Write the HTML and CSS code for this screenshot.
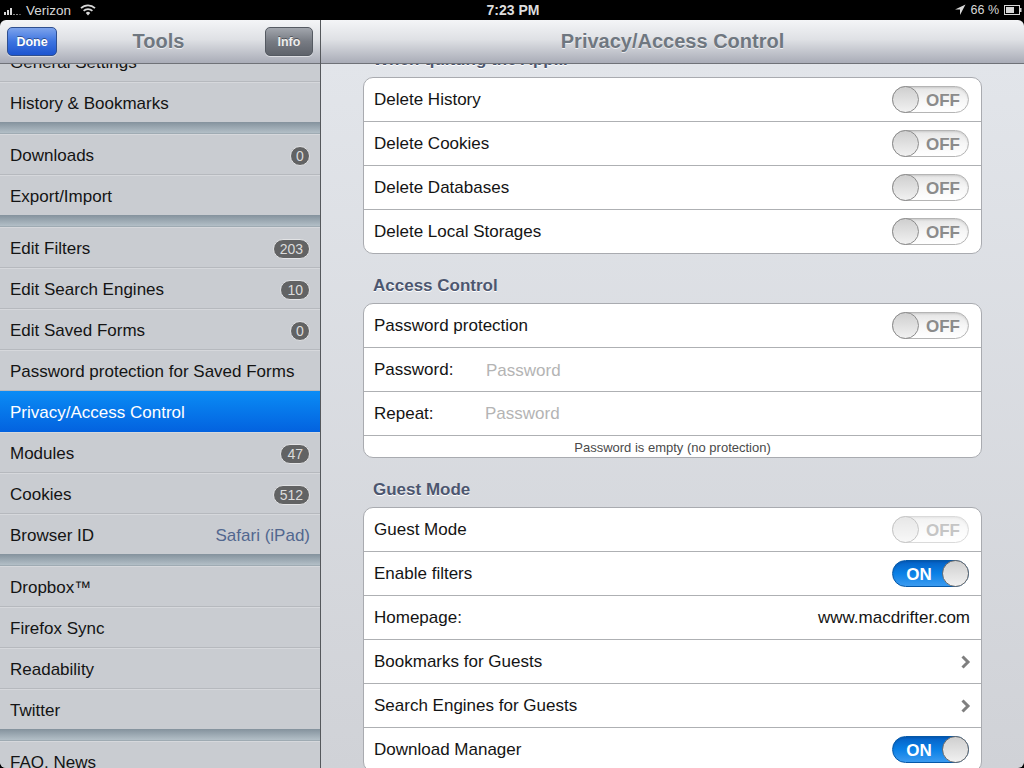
FILE: index.html
```html
<!DOCTYPE html>
<html lang="en">
<head>
<meta charset="utf-8">
<title>Privacy/Access Control</title>
<link rel="stylesheet" href="styles.css">
</head>
<body>
<div class="app">
  <header class="status">
    <div class="status-left">
      <svg class="signal" width="20" height="8" viewBox="0 0 20 8"><g fill="#d8d8d8"><rect x="0" y="5" width="2" height="3"/><rect x="3" y="3" width="2" height="5"/><rect x="6" y="1" width="2" height="7"/></g><g fill="#888"><rect x="9" y="7" width="2" height="1"/><rect x="12" y="7" width="2" height="1"/></g><rect x="15" y="7" width="2" height="1" fill="#555"/></svg>
      <span>Verizon</span>
      <svg class="wifi" width="16" height="12" viewBox="0 0 16 12"><g fill="none" stroke="#d8d8d8" stroke-width="1.7"><path d="M1 4.200a10 10 0 0 1 14 0"/><path d="M3.600 6.800a6.400 6.400 0 0 1 8.800 0"/></g><path d="M5.800 9a3 3 0 0 1 4.400 0L8 11.500z" fill="#d8d8d8"/></svg>
    </div>
    <div class="status-time">7:23 PM</div>
    <div class="status-right">
      <svg width="12" height="12" viewBox="0 0 12 12"><path d="M11.500.5 1 5.500h5V11z" fill="#d8d8d8"/></svg>
      <span class="pct">66 %</span>
      <svg width="18" height="10" viewBox="0 0 18 10"><rect x=".5" y=".5" width="15" height="9" fill="none" stroke="#d8d8d8"/><rect x="2" y="2" width="8" height="6" fill="#d8d8d8"/><rect x="16" y="3" width="1.500" height="4" fill="#d8d8d8"/></svg>
    </div>
  </header>

  <div class="screen">
    <aside class="side">
      <div class="nav">
        <button class="btn btn-done">Done</button>
        <h1 class="nav-title nav-title-side">Tools</h1>
        <button class="btn btn-info">Info</button>
      </div>
      <div class="side-scroll">
        <ul class="group group-first">
          <li class="item">General Settings</li>
          <li class="item">History &amp; Bookmarks</li>
        </ul>
        <ul class="group">
          <li class="item">Downloads <span class="badge badge-round">0</span></li>
          <li class="item">Export/Import</li>
        </ul>
        <ul class="group">
          <li class="item">Edit Filters <span class="badge">203</span></li>
          <li class="item">Edit Search Engines <span class="badge">10</span></li>
          <li class="item">Edit Saved Forms <span class="badge badge-round">0</span></li>
          <li class="item">Password protection for Saved Forms</li>
          <li class="item item-active">Privacy/Access Control</li>
          <li class="item">Modules <span class="badge">47</span></li>
          <li class="item">Cookies <span class="badge">512</span></li>
          <li class="item">Browser ID <span class="item-value">Safari (iPad)</span></li>
        </ul>
        <ul class="group">
          <li class="item">Dropbox™</li>
          <li class="item">Firefox Sync</li>
          <li class="item">Readability</li>
          <li class="item">Twitter</li>
        </ul>
        <ul class="group">
          <li class="item">FAQ, News</li>
        </ul>
      </div>
    </aside>

    <main class="main">
      <div class="nav nav-main">
        <h1 class="nav-title">Privacy/Access Control</h1>
      </div>
      <div class="main-scroll">
        <div class="column">
          <h2 class="section section-first">When quitting the App...</h2>
          <div class="card">
            <div class="row"><span>Delete History</span><span class="switch"><i class="knob"></i><b>OFF</b></span></div>
            <div class="row"><span>Delete Cookies</span><span class="switch"><i class="knob"></i><b>OFF</b></span></div>
            <div class="row"><span>Delete Databases</span><span class="switch"><i class="knob"></i><b>OFF</b></span></div>
            <div class="row"><span>Delete Local Storages</span><span class="switch"><i class="knob"></i><b>OFF</b></span></div>
          </div>
          <h2 class="section">Access Control</h2>
          <div class="card">
            <div class="row"><span>Password protection</span><span class="switch"><i class="knob"></i><b>OFF</b></span></div>
            <div class="row row-field"><label>Password:</label><input class="field" placeholder="Password"></div>
            <div class="row row-field row-repeat"><label>Repeat:</label><input class="field" placeholder="Password"></div>
            <div class="caption">Password is empty (no protection)</div>
          </div>
          <h2 class="section">Guest Mode</h2>
          <div class="card">
            <div class="row"><span>Guest Mode</span><span class="switch switch-disabled"><i class="knob"></i><b>OFF</b></span></div>
            <div class="row"><span>Enable filters</span><span class="switch switch-on"><b>ON</b><i class="knob"></i></span></div>
            <div class="row"><span>Homepage:</span><span class="row-value">www.macdrifter.com</span></div>
            <div class="row"><span>Bookmarks for Guests</span><svg class="chev" width="11" height="14" viewBox="0 0 11 14"><path d="M2.500 1.500 8 7l-5.500 5.500" fill="none" stroke="#7f7f7f" stroke-width="3"/></svg></div>
            <div class="row"><span>Search Engines for Guests</span><svg class="chev" width="11" height="14" viewBox="0 0 11 14"><path d="M2.500 1.500 8 7l-5.500 5.500" fill="none" stroke="#7f7f7f" stroke-width="3"/></svg></div>
            <div class="row"><span>Download Manager</span><span class="switch switch-on"><b>ON</b><i class="knob"></i></span></div>
          </div>
        </div>
      </div>
    </main>
  </div>
</div>
</body>
</html>
```
FILE: styles.css
```css
* { box-sizing: border-box; }
html, body { margin: 0; padding: 0; background: #000; }
body { font-family: "Liberation Sans", Arial, sans-serif; color: #111; }
ul { list-style: none; margin: 0; padding: 0; }
h1, h2 { margin: 0; }

.app { width: 1024px; height: 768px; display: flex; flex-direction: column; overflow: hidden; background: #000; }

.status { height: 20px; flex: none; display: grid; grid-template-columns: 1fr auto 1fr; align-items: center; color: #d8d8d8; font-size: 13.5px; padding: 0 2px 0 4px; }
.status-left { display: flex; align-items: center; gap: 2px; }
.status-left .wifi { margin-left: 7px; }
.signal { margin-top: 2px; }
.status-time { font-weight: 700; font-size: 14px; color: #ddd; }
.status-right { display: flex; align-items: center; justify-content: flex-end; gap: 5px; font-size: 12.5px; }

.screen { flex: 1; min-height: 0; display: flex; border-radius: 6px; overflow: hidden; }

.nav { height: 44px; flex: none; display: flex; align-items: center; justify-content: space-between; padding: 0 7px; position: relative; z-index: 2; border-bottom: 1px solid #6f7278; background: linear-gradient(#f4f5f7 0%, #dfe1e5 45%, #a9acb7 100%); }
.nav-main { justify-content: center; }
.nav-title { font-size: 20px; font-weight: 700; color: #6f7780; text-shadow: 0 1px 0 rgba(255,255,255,.7); }
.nav-title-side { margin-right: 5px; }

.btn { width: 50px; height: 29px; padding: 0; border-radius: 5px; border: 1px solid #4a5a72; color: #fff; font: 700 12.5px "Liberation Sans", Arial, sans-serif; box-shadow: 0 1px 0 rgba(255,255,255,.5); text-shadow: 0 -1px 0 rgba(0,0,0,.4); }
.btn-done { background: linear-gradient(#7da3ec 0%, #3d74e0 50%, #1d55d0 100%); border-color: #2f4f8f; }
.btn-info { width: 48px; background: linear-gradient(#a2a6ad 0%, #777b83 50%, #5f636b 100%); border-color: #555a62; color: #eee; }

.side { width: 321px; flex: none; display: flex; flex-direction: column; border-right: 1px solid #55585c; }
.side-scroll { flex: 1; min-height: 0; overflow: hidden; background: #c9ccd1; }
.group { background: #c9ccd1; }
.group + .group::before { content: ""; display: block; height: 11px; background: linear-gradient(#84929d, #b3bfc7); border-bottom: 1px solid #9fabb3; }
.group-first { margin-top: -23px; }

.item { height: 41px; padding: 4px 10px 0 10px; font-size: 17px; display: flex; align-items: center; justify-content: space-between; color: #141414; border-bottom: 1px solid #b6b9be; box-shadow: inset 0 1px 0 #d6d8dc; }
.item:last-child { border-bottom: 0; height: 40px; }
.item-active { padding-top: 3px; background: linear-gradient(#0a8cf5 0%, #0362df 100%); color: #fff; border-bottom: 0; box-shadow: none; }
.item-value { color: #52678f; }

.badge { min-width: 20px; height: 20px; padding: 0 6px; border-radius: 10px; background: #626364; color: #dcdcdc; border: 1px solid #e2e3e5; font-size: 14px; line-height: 18px; text-align: center; }
.badge-round { padding: 0; }

.main { flex: 1; min-width: 0; display: flex; flex-direction: column; }
.main-scroll { flex: 1; min-height: 0; overflow: hidden; background: linear-gradient(#e2e5ea, #d0d2d7); padding: 0 42px; }
.column { margin-top: -17px; }

.section { height: 24px; line-height: 26px; margin: 19px 0 6px 10px; font-size: 17px; font-weight: 700; color: #4c566f; text-shadow: 0 1px 0 #fff; }
.section-first { margin-top: 0; }

.card { background: #fff; border: 1px solid #a9abb0; border-radius: 10px; overflow: hidden; }
.row { height: 44px; padding: 0 12px 0 10px; font-size: 17px; display: flex; align-items: center; justify-content: space-between; color: #141414; border-bottom: 1px solid #aeb0b3; }
.card > .row:last-child { border-bottom: 0; height: 43px; }
.row-value { margin-right: -1px; }
.row-field { justify-content: flex-start; }
.row-field label { width: 112px; flex: none; }
.row-repeat label { width: 111px; }
.field { flex: 1; min-width: 0; margin-top: 2px; border: 0; outline: 0; padding: 0; background: transparent; font: 17px "Liberation Sans", Arial, sans-serif; }
.row-repeat .field { margin-top: 0; }
.field::placeholder { color: #b4b4b4; opacity: 1; }
.caption { height: 21px; line-height: 23px; text-align: center; font-size: 13px; color: #4a4a4a; }
.chev { margin-right: -2px; }

.switch { width: 77px; height: 27px; flex: none; border-radius: 14px; border: 1px solid #b5b5b5; display: flex; align-items: center; justify-content: space-between; background: linear-gradient(#e4e4e4 0%, #f6f6f6 50%, #fff 100%); box-shadow: inset 0 1px 2px rgba(0,0,0,.12); }
.switch b { flex: 1; text-align: center; font-size: 17px; color: #8b8b8b; padding-top: 2px; }
.knob { width: 27px; height: 27px; margin: -1px; flex: none; border-radius: 50%; border: 1px solid #8c8c8c; background: linear-gradient(#cfcfcf, #f1f1f1); }
.switch-disabled { opacity: .5; }
.switch-on { border-color: #0458a8; background: linear-gradient(#0560c4 0%, #0a80e6 50%, #3b9bf0 100%); }
.switch-on b { color: #fff; padding-left: 2px; }
.switch-on .knob { border-color: #6b6b6b; }
```
